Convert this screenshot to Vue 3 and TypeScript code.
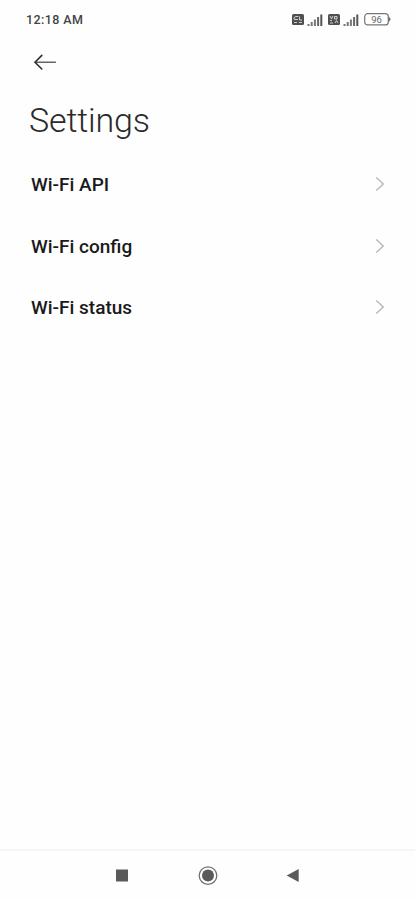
<script setup lang="ts">
interface SettingItem {
  id: string
  label: string
}

const items: SettingItem[] = [
  { id: 'api', label: 'Wi-Fi API' },
  { id: 'config', label: 'Wi-Fi config' },
  { id: 'status', label: 'Wi-Fi status' },
]

const sims: string[] = ['4G', 'Vo']
</script>

<template>
  <div class="screen">
    <header class="status-bar">
      <span class="clock">12:18 AM</span>
      <div class="indicators">
        <div v-for="sim in sims" :key="sim" class="sim">
          <svg width="12" height="11" viewBox="0 0 12 11">
            <rect width="12" height="11" rx="1.5" fill="#505050" />
            <g v-if="sim === '4G'" fill="none" stroke="#ddd" stroke-width="0.9">
              <path d="M2 5V3.5L4 2.5H6.5M2 5.5H6M7.5 2.5V6H10M2 8.5H5M7 8.5H10" />
            </g>
            <g v-else fill="none" stroke="#ddd" stroke-width="0.9">
              <path d="M2 2L3.5 5L5 2M6.5 2.5H9V5H6.5ZM2 6.5H4M2 9H5M7 9L8.5 6.5L10 9" />
            </g>
          </svg>
          <svg width="16" height="12" viewBox="0 0 16 12">
            <path d="M0.5 10H2.5V12H0.5Z" fill="#777" />
            <path d="M3.7 8H5.7V12H3.7Z" fill="#777" />
            <path d="M6.9 5.5H8.9V12H6.9Z" fill="#777" />
            <path d="M10.1 3H12.1V12H10.1Z" fill="#666" />
            <path d="M13.3 0.5H15.3V12H13.3Z" fill="#555" />
          </svg>
        </div>
        <div class="battery">
          <svg width="27" height="13" viewBox="0 0 27 13">
            <rect x="0.7" y="0.7" width="23.6" height="11.2" rx="3" fill="#fff" stroke="#777" stroke-width="1.2" />
            <path d="M24.8 4L26.4 6.3L24.8 8.6Z" fill="#666" stroke="#666" stroke-width="0.6" />
          </svg>
          <span class="level">96</span>
        </div>
      </div>
    </header>

    <div class="toolbar">
      <button class="back" aria-label="Back">
        <svg width="24" height="18" viewBox="0 0 24 18" fill="none" stroke-linecap="round" stroke-linejoin="round">
          <path d="M2 9.2H22.4" stroke="#666" stroke-width="1.5" />
          <path d="M8.8 2.4L2 9.2L8.8 16" stroke="#2b2b2b" stroke-width="1.6" />
        </svg>
      </button>
    </div>

    <h1 class="title">Settings</h1>

    <main class="list">
      <div v-for="item in items" :key="item.id" class="row">
        <span class="label">{{ item.label }}</span>
        <svg width="10" height="16" viewBox="0 0 10 16">
          <path d="M1.3 1.5L8.3 8L1.3 14.5" fill="none" stroke="#b4b4b4" stroke-width="1.3" />
        </svg>
      </div>
    </main>

    <nav class="nav-bar">
      <svg width="20" height="20" viewBox="0 0 20 20">
        <rect x="4" y="3.5" width="12" height="12" fill="#5a5a5a" />
      </svg>
      <svg width="20" height="20" viewBox="0 0 20 20">
        <circle cx="10" cy="9.6" r="8.8" fill="none" stroke="#707070" stroke-width="1.3" />
        <circle cx="10" cy="9.6" r="6" fill="#5a5a5a" />
      </svg>
      <svg width="20" height="20" viewBox="0 0 20 20">
        <path d="M2.7 9.5L14.7 3V16Z" fill="#5a5a5a" />
      </svg>
    </nav>
  </div>
</template>

<style>
body {
  background: #fefefe;
}
</style>

<style scoped>
.screen {
  box-sizing: border-box;
  height: 900px;
  display: flex;
  flex-direction: column;
  background: #fefefe;
  color: #1a1a1a;
  font-family: Roboto, "Liberation Sans", sans-serif;
}

svg {
  display: block;
  flex: none;
}

.status-bar {
  height: 39px;
  box-sizing: border-box;
  padding: 0 24px 0 26px;
  display: flex;
  align-items: center;
  justify-content: space-between;
}

.clock {
  font-size: 12.5px;
  font-weight: 500;
  line-height: 16px;
  letter-spacing: 0.4px;
  color: #444;
}

.indicators,
.sim {
  display: flex;
  align-items: center;
}

.indicators {
  gap: 5px;
}

.sim {
  gap: 3px;
}

.battery {
  position: relative;
}

.level {
  position: absolute;
  inset: 0 2px 0 0;
  text-align: center;
  font-size: 9.5px;
  line-height: 13px;
  color: #666;
}

.toolbar {
  height: 46px;
  box-sizing: border-box;
  padding: 14px 0 0 33px;
}

.back {
  display: block;
  padding: 0;
  border: 0;
  background: none;
}

.title {
  margin: 0;
  padding: 15px 0 0 29px;
  height: 68.5px;
  box-sizing: border-box;
  font-size: 34px;
  font-weight: 300;
  line-height: 40px;
  letter-spacing: -0.15px;
  color: #2a2a2a;
}

.row {
  height: 61.5px;
  box-sizing: border-box;
  padding: 0 30px 0 31px;
  display: flex;
  align-items: center;
  justify-content: space-between;
}

.label {
  padding-top: 1.6px;
  font-size: 19px;
  font-weight: 500;
  line-height: 24px;
}

.nav-bar {
  margin-top: auto;
  height: 51px;
  box-sizing: border-box;
  border-top: 2px solid #f6f6f6;
  display: flex;
  align-items: center;
  justify-content: center;
  gap: 66px;
}
</style>
